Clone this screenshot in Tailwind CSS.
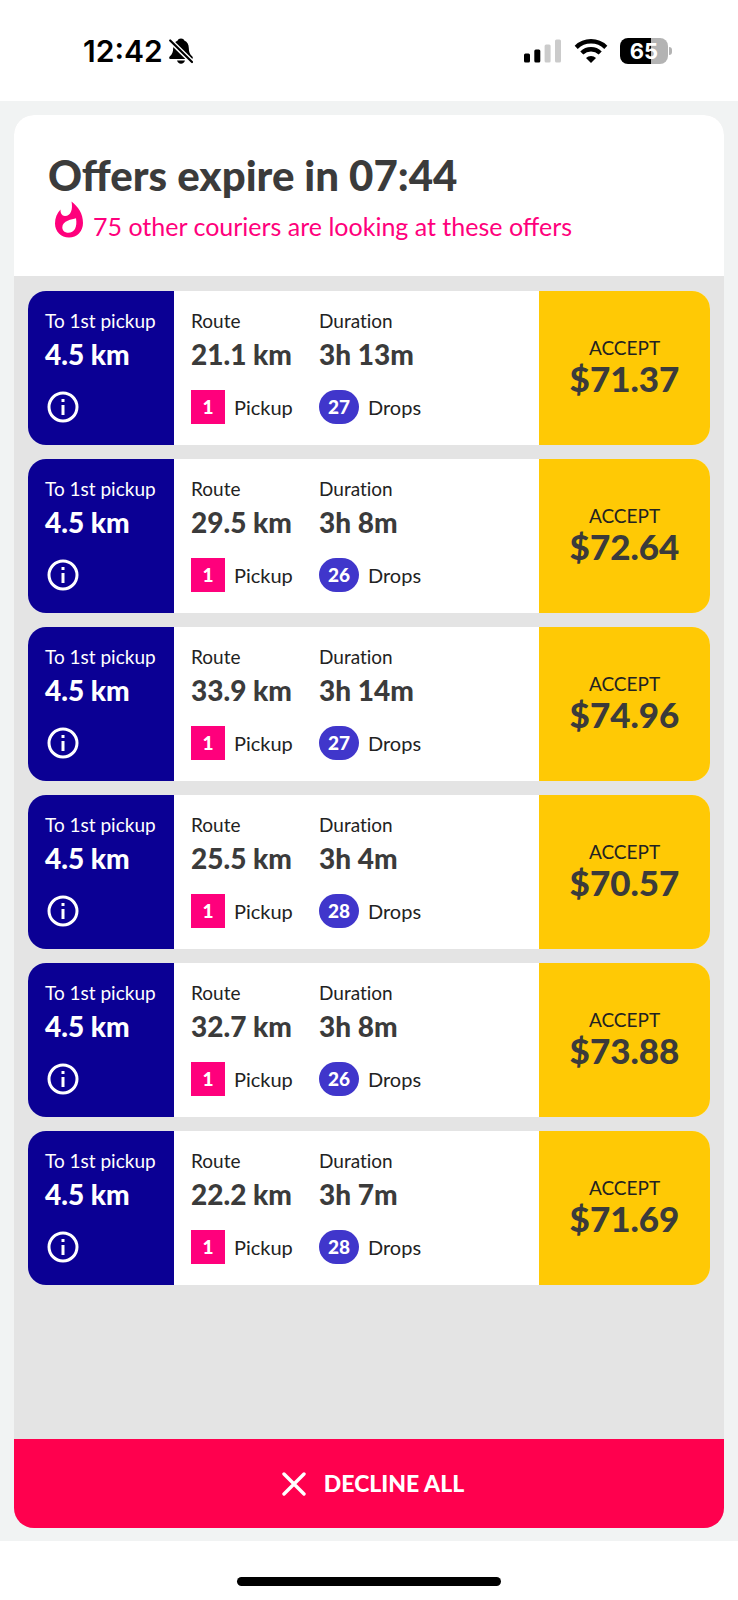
<!DOCTYPE html>
<html lang="en">
<head>
    <meta charset="UTF-8">
    <meta name="viewport" content="width=device-width, initial-scale=1.0">
    <title>Offers</title>
    <script src="https://cdn.jsdelivr.net/npm/@tailwindcss/browser@4"></script>
</head>
<body class="min-h-screen flex flex-col bg-white font-['Lato',sans-serif] text-[#222]">
    <!-- Status bar -->
    <header class="h-[101px] shrink-0 flex items-center justify-between pl-[83px] pr-[66px] font-['Inter',sans-serif] text-black">
        <div class="flex items-center gap-[6px]">
            <span class="text-[30px] leading-9 font-semibold">12:42</span>
            <svg class="w-6 h-[26px]" viewBox="0 0 24 26" fill="currentColor" aria-label="Silent">
                <path d="M12 0.500c-1.800 0-2.900.8-3.300 2C5.500 4 4.300 6.500 4.200 10c-.1 4-.8 6-3.500 8.500-.9.900-.6 2.500 1 2.500h20.600c1.600 0 1.900-1.600 1-2.500-2.700-2.500-3.400-4.500-3.500-8.500-.1-3.500-1.300-6-4.500-7.500-.4-1.200-1.500-2-3.300-2z"/>
                <path d="M8 22.500h8c-.5 2-2 3.200-4 3.200s-3.500-1.200-4-3.200z"/>
                <path d="M0 1.500l24 23.500" stroke="#fff" stroke-width="5"/>
                <path d="M1.200 2.500l21.800 21.500" stroke="currentColor" stroke-width="2.200" stroke-linecap="round"/>
            </svg>
        </div>
        <div class="flex items-center gap-3">
            <svg class="w-[38px] h-6" viewBox="0 0 38 24" aria-label="Signal">
                <rect x="0" y="14.500" width="6" height="9" rx="1.500"/>
                <rect x="10.300" y="10.500" width="6" height="13" rx="1.500"/>
                <rect x="20.600" y="5.500" width="6" height="18" rx="1.500" fill="#cbcbcb"/>
                <rect x="31" y="0.500" width="6" height="23" rx="1.500" fill="#cbcbcb"/>
            </svg>
            <svg class="w-[34px] h-6" viewBox="0 0 34 24" aria-label="Wi-Fi">
                <path d="M2.200 8.300a21.300 21.300 0 0 1 29.600 0M7.800 14a13.300 13.300 0 0 1 18.400 0" fill="none" stroke="#000" stroke-width="4.400"/>
                <path d="M17 24l-5-5a7.200 7.200 0 0 1 10 0z"/>
            </svg>
            <div class="flex items-center gap-px">
                <div class="w-12 h-[26px] rounded-lg bg-linear-to-r from-black from-65% to-[#b3b3b3] to-65% flex items-center justify-center text-white text-[22px] leading-6 font-bold">65</div>
                <div class="w-[3px] h-2 rounded-r-full bg-[#b3b3b3]"></div>
            </div>
        </div>
    </header>

    <!-- Offers panel -->
    <main class="grow flex flex-col bg-[#f1f3f3] p-[14px] pb-[13px]">
        <section class="grow flex flex-col rounded-[20px] overflow-hidden bg-[#e4e4e4]">
            <div class="h-[161px] bg-white px-[34px] pt-9">
                <h1 class="text-[42px] leading-[48px] font-black text-[#3b3b3b]">Offers expire in 07:44</h1>
                <div class="flex items-start text-[#ff007c]">
                    <svg class="w-10 h-10 shrink-0" viewBox="0 0 40 40" fill="currentColor" aria-hidden="true">
                        <path fill-rule="evenodd" d="M23.500 2.500c6.500 5 11.500 12 11.500 21.500C35 32.500 29 38.500 21 38.500S7 32.500 7 24.500C7 19 9 14 12.500 10.500c-.2 3.500 1.300 6.500 4.500 6.500 6 0 8-7 6.500-14.500zM28 19.300c-4 1.200-13.500 2.200-13.700 9 0 3.300 2.500 5.500 6 5.500 6 0 9.200-5.500 7.700-14.500z"/>
                    </svg>
                    <p class="pl-[5px] mt-[11px] text-[25px] leading-8">75 other couriers are looking at these offers</p>
                </div>
            </div>

            <ul id="offers" class="grow flex flex-col gap-[14px] p-[14px] pt-[15px] [font-variant-ligatures:none]"></ul>

            <button class="h-[89px] shrink-0 pl-2 bg-[#ff004e] flex items-center justify-center gap-[18px] text-white text-[23px] font-black">
                <svg class="w-6 h-6" viewBox="0 0 24 24" stroke="currentColor" stroke-width="3.400" stroke-linecap="round" aria-hidden="true">
                    <path d="M2 2l20 20M22 2l-20 20"/>
                </svg>
                DECLINE ALL
            </button>
        </section>
    </main>

    <!-- Home indicator -->
    <footer class="h-[59px] shrink-0 flex justify-center pt-9">
        <div class="w-[264px] h-[9px] rounded-full bg-black"></div>
    </footer>

    <script>
        const offers = [
            { route: '21.1 km', duration: '3h 13m', drops: 27, price: '$71.37' },
            { route: '29.5 km', duration: '3h 8m', drops: 26, price: '$72.64' },
            { route: '33.9 km', duration: '3h 14m', drops: 27, price: '$74.96' },
            { route: '25.5 km', duration: '3h 4m', drops: 28, price: '$70.57' },
            { route: '32.7 km', duration: '3h 8m', drops: 26, price: '$73.88' },
            { route: '22.2 km', duration: '3h 7m', drops: 28, price: '$71.69' },
        ];

        document.getElementById('offers').innerHTML = offers.map(o => `
            <li class="h-[154px] flex rounded-[18px] overflow-hidden bg-white text-[19px] leading-6">
                <div class="w-[146px] shrink-0 bg-[#0b0094] text-white pl-[17px] pt-[18px]">
                    <p class="whitespace-nowrap">To 1st pickup</p>
                    <p class="mt-[5px] text-[28px] leading-8 font-black">4.5 km</p>
                    <button class="block mt-[21px] ml-[2px]" aria-label="Pickup details">
                        <svg class="w-8 h-8" viewBox="0 0 32 32" fill="none" stroke="currentColor" stroke-width="3">
                            <circle cx="16" cy="16" r="14"/>
                            <path d="M16 14v10M16 8v3"/>
                        </svg>
                    </button>
                </div>
                <div class="grow flex pl-[17px] pt-[18px]">
                    <div class="w-32">
                        <p>Route</p>
                        <p class="mt-[5px] text-[28px] leading-8 font-black text-[#3b3b3b] whitespace-nowrap">${o.route}</p>
                        <div class="mt-5 flex items-center gap-[9px]">
                            <span class="w-[34px] h-[34px] bg-[#ff007c] flex items-center justify-center text-white font-black">1</span>
                            <span class="text-xl leading-6">Pickup</span>
                        </div>
                    </div>
                    <div>
                        <p>Duration</p>
                        <p class="mt-[5px] text-[28px] leading-8 font-black text-[#3b3b3b] whitespace-nowrap">${o.duration}</p>
                        <div class="mt-5 flex items-center gap-[9px]">
                            <span class="w-10 h-[34px] rounded-full bg-[#4036cb] flex items-center justify-center text-white font-black">${o.drops}</span>
                            <span class="text-xl leading-6">Drops</span>
                        </div>
                    </div>
                </div>
                <button class="w-[171px] shrink-0 bg-[#ffc905] flex flex-col items-center justify-center">
                    <span>ACCEPT</span>
                    <span class="text-[35px] leading-9 pb-1 font-black text-[#3b3b3b]">${o.price}</span>
                </button>
            </li>`).join('');
    </script>
</body>
</html>
